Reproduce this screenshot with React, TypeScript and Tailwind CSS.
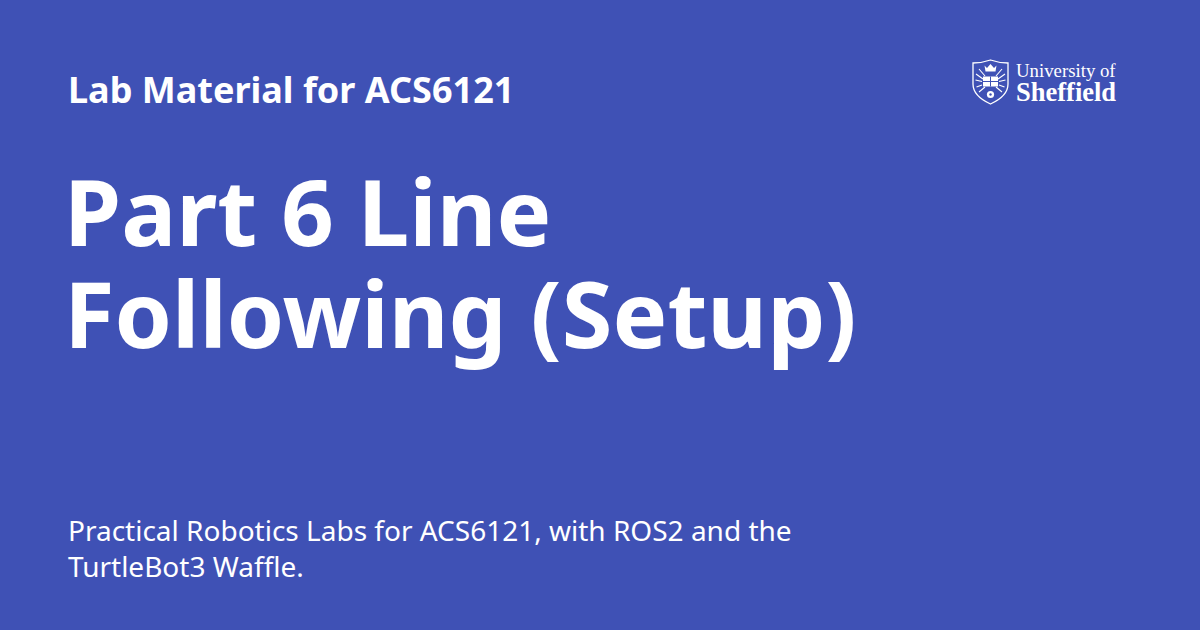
export default function App() {
  return (
    <div className="w-[1200px] h-[630px] bg-[#3f51b5] text-white font-['Noto_Sans',sans-serif] pl-[64px] pr-[83px] flex flex-col overflow-hidden">
      <div className="flex justify-between items-start pt-[65px]">
        <div className="text-[36px] leading-[50px] font-bold h-[50px] pl-[4px]">Lab Material for ACS6121</div>
        <div className="flex items-center gap-[7px] -mt-[6px]">
          {/* university crest */}
          <svg width="37" height="46" viewBox="0 0 37 46" fill="none" stroke="white">
            <path d="M1 4 Q10 4 18.5 1 Q27 4 36 4 V25 Q36 37 18.5 45 Q1 37 1 25 Z" strokeWidth="1.3" />
            <path d="M12.5 6.5 L15 9 L18.5 5 L22 9 L24.5 6.5 L23.5 12.5 H13.5 Z" fill="white" stroke="none" />
            <path d="M7 10 L13 17 M4 15 L11 20 M3.5 21 L10 22.5 M4.5 28 L10 26 M7 33 L13 28 M30 10 L24 17 M33 15 L26 20 M33.5 21 L27 22.5 M32.5 28 L27 26 M30 33 L24 28" strokeWidth="1.1" />
            <path d="M11 17.5 H26 V27.5 H11 Z" fill="white" stroke="none" />
            <path d="M18.5 17.5 V27.5 M11 22.5 H26" stroke="#3f51b5" strokeWidth="1" />
            <circle cx="18.5" cy="35.5" r="3.6" fill="white" stroke="none" />
            <circle cx="18.5" cy="35.5" r="1.2" fill="#3f51b5" stroke="none" />
          </svg>
          <div className="font-['Liberation_Serif',serif] w-[101px]">
            <div className="text-[18.8px] leading-[20px] whitespace-nowrap">University of</div>
            <div className="text-[26.5px] leading-[23px] font-bold whitespace-nowrap">Sheffield</div>
          </div>
        </div>
      </div>
      <div className="text-[92px] leading-[102px] font-bold mt-[45px]">
        Part 6 Line
        <br />
        Following (Setup)
      </div>
      <div className="text-[28px] leading-[36px] mt-[148px] w-[800px] pl-[4px]">
        Practical Robotics Labs for ACS6121, with ROS2 and the TurtleBot3 Waffle.
      </div>
    </div>
  );
}
